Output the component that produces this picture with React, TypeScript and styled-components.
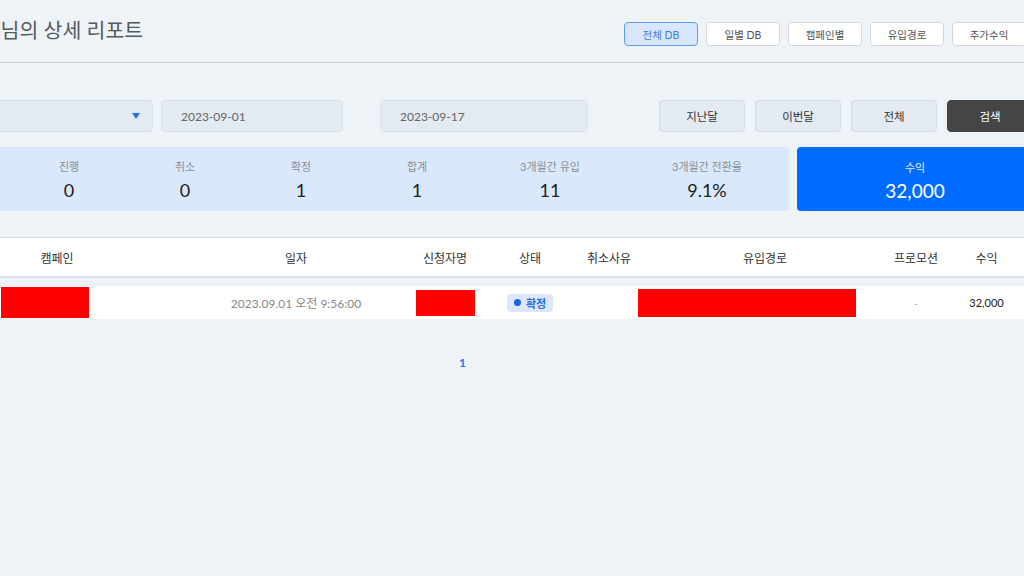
import React from 'react';
import styled, { createGlobalStyle } from 'styled-components';

const GlobalStyle = createGlobalStyle`
  html, body {
    margin: 0;
    padding: 0;
    background: #eef3f8;
    overflow: hidden;
    font-family: Lato, "Noto Sans CJK KR", sans-serif;
  }
  * {
    box-sizing: border-box;
  }
`;

const Main = styled.div`
  width: 1087px;
  margin-left: -54px;
  display: flex;
  flex-direction: column;
`;

const Header = styled.header`
  height: 63px;
  display: flex;
  align-items: flex-start;
  justify-content: space-between;
  padding-right: 7px;
  border-bottom: 1px solid #cfd4da;
`;

const Title = styled.h1`
  margin: 15px 0 0 -2px;
  font-size: 20.5px;
  line-height: 30px;
  font-weight: 400;
  color: #555a60;
  white-space: nowrap;
`;

const TabGroup = styled.div`
  display: flex;
  gap: 8px;
  margin-top: 22px;
`;

const Tab = styled.button<{ active?: boolean }>`
  width: 74px;
  height: 24px;
  padding: 0;
  border-radius: 4px;
  font-family: inherit;
  font-size: 10.5px;
  cursor: pointer;
  border: 1px solid ${({ active }) => (active ? '#5b9bf0' : '#d4d8dd')};
  background: ${({ active }) => (active ? '#d9e7fd' : '#ffffff')};
  color: ${({ active }) => (active ? '#3f7ee0' : '#555')};
`;

const FilterRow = styled.div`
  display: flex;
  align-items: center;
  height: 32px;
  margin-top: 37px;
`;

const Field = styled.div<{ w: number }>`
  width: ${({ w }) => w}px;
  height: 32px;
  display: flex;
  align-items: center;
  justify-content: space-between;
  padding: 0 12px 0 19px;
  background: #e3eaf2;
  border: 1px solid #d8e0e9;
  border-radius: 4px;
  font-size: 12px;
  color: #666;
`;

const Caret = styled.span`
  width: 0;
  height: 0;
  border-left: 4px solid transparent;
  border-right: 4px solid transparent;
  border-top: 6px solid #1e73e8;
`;

const ButtonGroup = styled.div`
  display: flex;
  gap: 10px;
  margin-left: auto;
`;

const FilterButton = styled.button<{ dark?: boolean }>`
  width: 86px;
  height: 32px;
  border-radius: 4px;
  font-family: inherit;
  font-size: 11.5px;
  cursor: pointer;
  border: 1px solid ${({ dark }) => (dark ? '#3f3f3f' : '#d5dde6')};
  background: ${({ dark }) => (dark ? '#454545' : '#e3eaf2')};
  color: ${({ dark }) => (dark ? '#ffffff' : '#333')};
`;

const StatsRow = styled.div`
  display: flex;
  gap: 8px;
  height: 64px;
  margin-top: 15px;
`;

const StatPanel = styled.div`
  flex: 1;
  display: grid;
  grid-template-columns: 116px 116px 116px 116px 150px 1fr;
  padding-left: 65px;
  background: #d9e8fb;
  border-radius: 0 4px 4px 0;
`;

const Stat = styled.div`
  display: flex;
  flex-direction: column;
  align-items: center;
  padding-top: 12px;
`;

const StatLabel = styled.span<{ light?: boolean }>`
  font-size: 11px;
  line-height: 16px;
  color: ${({ light }) => (light ? '#e6f0ff' : '#8a8f96')};
`;

const StatValue = styled.span<{ light?: boolean }>`
  margin-top: 4px;
  font-size: ${({ light }) => (light ? '19px' : '18px')};
  line-height: 22px;
  color: ${({ light }) => (light ? '#ffffff' : '#222')};
`;

const RevenuePanel = styled.div`
  width: 236px;
  display: flex;
  flex-direction: column;
  align-items: center;
  padding-top: 13px;
  background: #006cff;
  border-radius: 4px;
`;

const Table = styled.div`
  margin-top: 26px;
  display: flex;
  flex-direction: column;
  gap: 8px;
`;

const cols = '236px 228px 70px 100px 58px 254px 48px 93px';

const HeadRow = styled.div`
  display: grid;
  grid-template-columns: ${cols};
  height: 41px;
  background: #ffffff;
  border-top: 1px solid #d3d8de;
  border-bottom: 2px solid #dcdfe4;
`;

const HeadCell = styled.div<{ pr?: number }>`
  display: flex;
  align-items: center;
  justify-content: center;
  padding-right: ${({ pr }) => pr ?? 0}px;
  font-size: 12px;
  color: #333;
  white-space: nowrap;
`;

const BodyRow = styled.div`
  display: grid;
  grid-template-columns: ${cols};
  height: 33px;
  background: #ffffff;
`;

const Cell = styled.div<{ start?: boolean; pl?: number }>`
  display: flex;
  align-items: center;
  justify-content: ${({ start }) => (start ? 'flex-start' : 'center')};
  padding-left: ${({ pl }) => pl ?? 0}px;
  font-size: 12px;
  color: #888;
  white-space: nowrap;
`;

const Redacted = styled.div<{ w: number; h: number }>`
  width: ${({ w }) => w}px;
  height: ${({ h }) => h}px;
  background: #ff0000;
`;

const Badge = styled.span`
  display: inline-flex;
  align-items: center;
  gap: 5px;
  height: 18px;
  padding: 0 7px;
  border-radius: 4px;
  background: #dde7fb;
  color: #2a6ad9;
  font-size: 11px;
  font-weight: 600;
`;

const Dot = styled.span`
  width: 7px;
  height: 7px;
  border-radius: 50%;
  background: #1565e0;
`;

const Dash = styled.span`
  font-size: 10px;
  color: #e88;
`;

const Amount = styled.span`
  font-size: 11px;
  color: #222;
`;

const Pagination = styled.div`
  display: flex;
  justify-content: center;
  padding-right: 54px;
  margin-top: 36px;
`;

const PageLink = styled.span`
  font-size: 12px;
  line-height: 16px;
  font-weight: 700;
  color: #2f6fe6;
`;

const stats = [
  { label: '진행', value: '0' },
  { label: '취소', value: '0' },
  { label: '확정', value: '1' },
  { label: '합계', value: '1' },
  { label: '3개월간 유입', value: '11' },
  { label: '3개월간 전환율', value: '9.1%' },
];

const tabs = ['전체 DB', '일별 DB', '캠페인별', '유입경로', '추가수익'];

export default function App() {
  return (
    <>
      <GlobalStyle />
      <Main>
        <Header>
          <Title>홍길동님의 상세 리포트</Title>
          <TabGroup>
            {tabs.map((t, i) => (
              <Tab key={t} active={i === 0}>
                {t}
              </Tab>
            ))}
          </TabGroup>
        </Header>

        <FilterRow>
          <Field w={207}>
            <span />
            <Caret />
          </Field>
          <Field w={182} style={{ marginLeft: 8 }}>
            2023-09-01
          </Field>
          <Field w={208} style={{ marginLeft: 37 }}>
            2023-09-17
          </Field>
          <ButtonGroup>
            <FilterButton>지난달</FilterButton>
            <FilterButton>이번달</FilterButton>
            <FilterButton>전체</FilterButton>
            <FilterButton dark>검색</FilterButton>
          </ButtonGroup>
        </FilterRow>

        <StatsRow>
          <StatPanel>
            {stats.map((s) => (
              <Stat key={s.label}>
                <StatLabel>{s.label}</StatLabel>
                <StatValue>{s.value}</StatValue>
              </Stat>
            ))}
          </StatPanel>
          <RevenuePanel>
            <StatLabel light>수익</StatLabel>
            <StatValue light>32,000</StatValue>
          </RevenuePanel>
        </StatsRow>

        <Table>
          <HeadRow>
            <HeadCell pr={14}>캠페인</HeadCell>
            <HeadCell>일자</HeadCell>
            <HeadCell>신청자명</HeadCell>
            <HeadCell>상태</HeadCell>
            <HeadCell>취소사유</HeadCell>
            <HeadCell>유입경로</HeadCell>
            <HeadCell>프로모션</HeadCell>
            <HeadCell>수익</HeadCell>
          </HeadRow>
          <BodyRow>
            <Cell start pl={55}>
              <Redacted w={88} h={31} />
            </Cell>
            <Cell>2023.09.01 오전 9:56:00</Cell>
            <Cell>
              <Redacted w={59} h={26} />
            </Cell>
            <Cell>
              <Badge>
                <Dot />
                확정
              </Badge>
            </Cell>
            <Cell />
            <Cell start>
              <Redacted w={218} h={28} />
            </Cell>
            <Cell>
              <Dash>-</Dash>
            </Cell>
            <Cell>
              <Amount>32,000</Amount>
            </Cell>
          </BodyRow>
        </Table>

        <Pagination>
          <PageLink>1</PageLink>
        </Pagination>
      </Main>
    </>
  );
}
